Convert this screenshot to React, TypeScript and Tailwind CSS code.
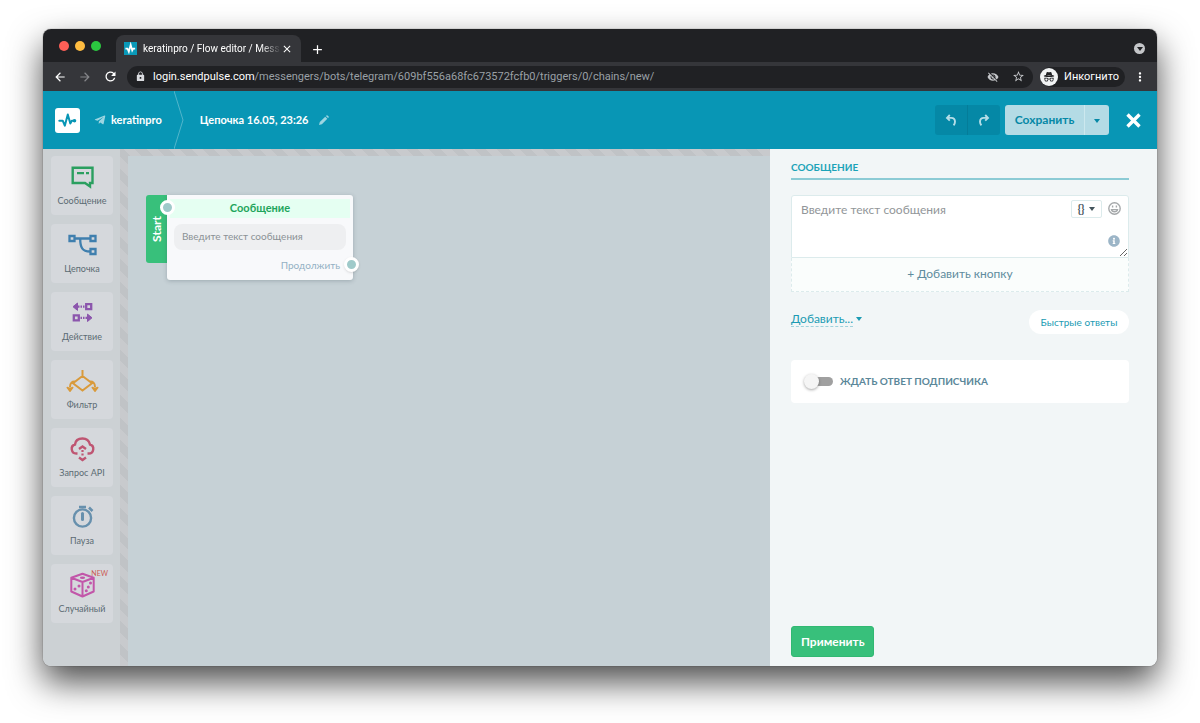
import React, { useState } from 'react';
import { BsIncognito } from 'react-icons/bs';
import { FaInfoCircle, FaTelegramPlane } from 'react-icons/fa';
import { MdAdd, MdArrowBack, MdArrowForward, MdClose, MdLock, MdMoreVert, MdRefresh, MdStarBorder, MdVisibilityOff } from 'react-icons/md';

const PULSE = 'M4.3 12.700h3.400l2.100 5L12.800 6.500l2.500 9 1.500-2.800H20';

const BLOCKS = [
  {
    label: 'Сообщение',
    color: 'text-[#2a9f5f]',
    icon: (
      <>
        <path d="M4.700 4.700h19.800v15.300h-2.500v3.500l-5-3.500H4.700z" strokeWidth={2.400} />
        <path d="M9 10.200h7M18 10.200h3" strokeWidth={2.200} />
      </>
    ),
  },
  {
    label: 'Цепочка',
    color: 'text-[#3f7fae]',
    icon: (
      <>
        <path d="M1.500 5h5v5h-5zM22.500 5h5v5h-5zM22.500 18h5v5h-5z" strokeWidth={2.300} />
        <path d="M7 7.500h15M12.200 7.500c0 9 2 13 9.800 13" strokeWidth={2.300} />
      </>
    ),
  },
  {
    label: 'Действие',
    color: 'text-[#8c56ad]',
    icon: (
      <>
        <path d="M18.200 5.200h5v5h-5zM5.800 16.300h5v5h-5z" strokeWidth={2.300} />
        <path d="M10 7.700h7M12.500 18.800h7" strokeWidth={2.200} strokeDasharray="1.500 1" />
        <path d="M9.500 4v7.400L5 7.700zM19.500 15.100v7.400l4.500-3.700z" fill="currentColor" strokeWidth={1} />
      </>
    ),
  },
  {
    label: 'Фильтр',
    color: 'text-[#d99a3b]',
    icon: (
      <>
        <path d="M14.500 3v6M14.500 9l9.500 7.200-9.500 7.300L5 16.200zM7.500 14.600c-3.500-.4-5.500 1.400-5.500 5.400M21.500 14.600c3.500-.4 5.500 1.400 5.500 5.400" strokeWidth={2} />
        <path d="M-.8 20.500q2.800 1.200 5.600 0L2 24.300zM24.200 20.500q2.800 1.200 5.600 0L27 24.300z" fill="currentColor" strokeWidth={1.400} strokeLinejoin="round" />
      </>
    ),
  },
  {
    label: 'Запрос API',
    color: 'text-[#bf5572]',
    icon: (
      <>
        <path d="M9.500 18.500h-1a4.600 4.600 0 01-1.500-9C7.500 5 10.500 3.500 14.500 3.500S21 5.500 22 9.500a4.600 4.600 0 01-1.300 9h-1.200" strokeWidth={2.400} />
        <path d="M11 14l3.500-2.500L18 14M11 22.500l3.500 2.500 3.500-2.500" strokeWidth={2.400} />
        <path d="M14.500 15v6.500" strokeWidth={2.200} strokeDasharray="2 1.500" />
      </>
    ),
  },
  {
    label: 'Пауза',
    color: 'text-[#6790ad]',
    icon: (
      <>
        <circle cx="14.500" cy="15" r="8.600" strokeWidth={2.400} />
        <path d="M11 4h7M21 4.500l3.500 3.500" strokeWidth={2.600} />
        <path d="M14.500 10.500v6" strokeWidth={3} strokeLinecap="round" />
      </>
    ),
  },
  {
    label: 'Случайный',
    color: 'text-[#c256a9]',
    badge: 'NEW',
    icon: (
      <>
        <path d="M14.500 2.800l11.200 4v13.700l-11.200 5-11.200-5V6.800zM3.300 6.800l11.200 4.200 11.200-4.200M14.500 11v14.500" strokeWidth={2} strokeLinejoin="round" />
        <g fill="currentColor" stroke="none">
          <ellipse cx="14.500" cy="6.700" rx="2.600" ry="1.300" />
          <circle cx="7" cy="18" r="1.500" />
          <circle cx="11" cy="15" r="1.500" />
          <circle cx="18.300" cy="19.800" r="1.500" />
          <circle cx="20.300" cy="16" r="1.500" />
          <circle cx="22.500" cy="12" r="1.500" />
        </g>
      </>
    ),
  },
];

const Caret: React.FC<{ className?: string }> = ({ className = '' }) => (
  <svg className={`w-[6px] h-[4px] shrink-0 ${className}`} viewBox="0 0 6 4" fill="currentColor">
    <path d="M0 0h6L3 4z" />
  </svg>
);

const BrowserBar: React.FC = () => (
  <div className="shrink-0 bg-[#202124] text-white font-['Roboto','Liberation_Sans',sans-serif]">
    <div className="h-[33px] flex items-end pl-4 pr-3">
      <div className="flex gap-[6px] self-center mr-[15px]">
        <span className="size-[10px] rounded-full bg-[#ff5f57]" />
        <span className="size-[10px] rounded-full bg-[#febc40]" />
        <span className="size-[10px] rounded-full bg-[#2bc840]" />
      </div>
      <div className="w-[185px] h-[27px] rounded-t-lg bg-[#35363a] flex items-center px-2 text-[10px]">
        <svg className="size-[13px] shrink-0 bg-[#0a99b8] mr-[6px]" viewBox="2 2 21 21" fill="none" stroke="white" strokeWidth={2.800}>
          <path d={PULSE} />
        </svg>
        <span className="flex-1 whitespace-nowrap [mask-image:linear-gradient(to_right,black_85%,transparent)]">
          keratinpro / Flow editor / Mess
        </span>
        <button aria-label="Close tab">
          <MdClose className="size-[12px]" />
        </button>
      </div>
      <button aria-label="New tab" className="ml-[9px] mb-[5px]">
        <MdAdd className="size-[15px]" />
      </button>
      <button aria-label="Search tabs" className="ml-auto mb-2 size-[11px] rounded-full bg-[#c4c6c9] text-[#202124] flex items-center justify-center">
        <Caret />
      </button>
    </div>

    <div className="h-[29px] bg-[#35363a] flex items-center pl-[10px] pr-[10px]">
      <button aria-label="Back"><MdArrowBack className="size-[14px]" /></button>
      <button aria-label="Forward" className="ml-[11px] text-[#85868a]"><MdArrowForward className="size-[14px]" /></button>
      <button aria-label="Reload" className="ml-[11px]"><MdRefresh className="size-[15px]" /></button>
      <div className="ml-[9px] flex-1 min-w-0 h-[22px] rounded-full bg-[#202124] flex items-center pl-2 pr-2 text-[11px]">
        <MdLock className="size-[11px] shrink-0 mr-[7px] text-[#dadce0]" />
        <span className="flex-1 truncate pt-px text-[#9aa0a6]">
          <span className="text-white">login.sendpulse.com</span>/messengers/bots/telegram/609bf556a68fc673572fcfb0/triggers/0/chains/new/
        </span>
        <MdVisibilityOff className="size-[12px] text-[#c4c6c9] mr-[13px]" />
        <MdStarBorder className="size-[13px] text-[#c4c6c9]" />
      </div>
      <div className="ml-[7px] h-5 rounded-full bg-[#202124] flex items-center pr-[6px] text-[11px]">
        <span className="size-[18px] mr-[6px] rounded-full bg-[#f1f3f4] text-[#202124] flex items-center justify-center">
          <BsIncognito className="size-[12px]" />
        </span>
        <span className="pt-px">Инкогнито</span>
      </div>
      <button aria-label="Menu" className="ml-[8px]"><MdMoreVert className="size-[14px]" /></button>
    </div>
  </div>
);

const Header: React.FC = () => (
  <header className="shrink-0 h-[58px] bg-[#0896b5] text-white flex items-center pl-3 pr-4 font-bold text-[11px]">
    <a href="#" aria-label="SendPulse" className="size-[25px] rounded-[3px] bg-white text-[#0896b5]">
      <svg className="size-[25px]" viewBox="0 0 25 25" fill="none" stroke="currentColor" strokeWidth={2} strokeLinejoin="round" strokeLinecap="round">
        <path d={PULSE} />
        <circle cx="19.500" cy="12.700" r="0.800" />
      </svg>
    </a>
    <a href="#" className="ml-[14px] flex items-center gap-[5px]">
      <FaTelegramPlane className="size-[12px] opacity-60" />
      keratinpro
    </a>
    <svg className="ml-[12px] w-[10px] h-full" viewBox="0 0 10 58" preserveAspectRatio="none" fill="none" stroke="#fff" strokeOpacity={0.3}>
      <path d="M0 0l9 29-9 29" />
    </svg>
    <h1 className="ml-[16px] pt-px">Цепочка 16.05, 23:26</h1>
    <button aria-label="Переименовать" className="ml-[10px] opacity-60">
      <svg className="size-[10px]" viewBox="0 0 10 10" fill="currentColor">
        <path d="M0 10l.8-2.900L6.200 1.700 8.300 3.800 2.900 9.200zM6.900 1l.6-.6q.5-.5 1 0l1.100 1.100q.5.500 0 1l-.6.600z" />
      </svg>
    </button>

    <div className="ml-auto flex items-center">
      <div className="flex rounded-[3px] overflow-hidden bg-[#0588a6] text-[#b5dde7]">
        <button aria-label="Отменить" className="w-[33px] h-[30px] flex items-center justify-center border-r border-[#047d99]">
          <svg className="size-[12px]" viewBox="0 0 12 12" fill="none" stroke="currentColor" strokeWidth={1.900}>
            <path d="M4.800 1L2 3.900l2.800 2.800M2.200 3.900h4Q10 3.900 10 7.800q0 2-1.400 3.500" />
          </svg>
        </button>
        <button aria-label="Повторить" className="w-[32px] h-[30px] flex items-center justify-center">
          <svg className="size-[12px]" viewBox="0 0 12 12" fill="none" stroke="currentColor" strokeWidth={1.900}>
            <path d="M7.200 1L10 3.900 7.200 6.700M9.800 3.900h-4Q2 3.900 2 7.800q0 2 1.400 3.500" />
          </svg>
        </button>
      </div>
      <div className="ml-[5px] flex rounded-[3px] bg-[#b4dbe5] text-[#0588a6]">
        <button className="w-[80px] h-[30px] text-[12px] border-r border-[#cce8ee]">Сохранить</button>
        <button aria-label="Другие варианты" className="w-[24px] h-[30px] pt-[2px] flex items-center justify-center">
          <Caret />
        </button>
      </div>
      <button aria-label="Закрыть" className="ml-[17px]">
        <svg className="size-[15px]" viewBox="0 0 15 15" fill="none" stroke="currentColor" strokeWidth={3.400}>
          <path d="M1.500 1.500l12 12M13.500 1.500l-12 12" />
        </svg>
      </button>
    </div>
  </header>
);

const Sidebar: React.FC = () => (
  <aside className="w-[77px] shrink-0 bg-[#ccd1d4] pl-2 pr-[7px] pt-[7px] flex flex-col gap-[9px]">
    {BLOCKS.map((b) => (
      <button key={b.label} className="relative h-[59px] rounded bg-[#d5d8dc] flex flex-col items-center pt-[7px] text-[9px] leading-[12px] text-[#5b6b73]">
        <svg className={`size-[29px] mb-[3px] overflow-visible ${b.color}`} viewBox="0 0 29 29" fill="none" stroke="currentColor">
          {b.icon}
        </svg>
        {b.label}
        {b.badge && <span className="absolute top-1 right-[5px] text-[7px] leading-[10px] text-[#cc5a52]">{b.badge}</span>}
      </button>
    ))}
  </aside>
);

const Canvas: React.FC = () => (
  <div className="flex-1 min-w-0 flex pl-2 pt-[7px] bg-[repeating-linear-gradient(45deg,#c8cacd_0_8px,#c0c3c6_8px_16px)]">
    <div className="relative flex-1 bg-[#c6d1d6]">
      <div className="absolute left-[18px] top-[39px] flex items-start">
        <div className="w-[21px] h-[68px] rounded-l-[3px] bg-[#38c07b] text-white text-[12px] font-bold flex items-center justify-center">
          <span className="-rotate-90">Start</span>
        </div>
        <div className="relative w-[186px] h-[85px] rounded-r-[3px] rounded-bl-[3px] bg-[#f8f9fb] shadow-[0_1px_4px_rgba(60,80,90,0.3)] px-[3px] pt-1">
          <div className="h-[19px] bg-[#e5fff2] text-[#1fa55c] text-[11px] leading-[18px] font-bold text-center">Сообщение</div>
          <div className="mx-1 mt-[6px] h-[26px] rounded-lg bg-[#eeeff1] px-2 text-[10px] leading-[25px] text-[#8b9195]">Введите текст сообщения</div>
          <div className="mt-[8px] pr-[10px] text-right text-[10px] leading-[14px] text-[#94b1c4]">Продолжить</div>
          <span className="absolute -left-[7px] top-[5px] size-[15px] rounded-full border-[3px] border-white bg-[#9fcaca]" />
          <span className="absolute -right-[6px] top-[62px] size-[15px] rounded-full border-[3px] border-white bg-[#9fcaca] shadow" />
        </div>
      </div>
    </div>
  </div>
);

const MessagePanel: React.FC = () => {
  const [text, setText] = useState('');
  const [wait, setWait] = useState(false);

  return (
    <section className="w-[387px] shrink-0 bg-[#f2f6f7] pl-[21px] pr-7 pt-[11px] pb-[9px] flex flex-col items-stretch">
      <h2 className="h-[20px] border-b-2 border-[#8ccbd5] text-[10px] leading-[14px] font-bold text-[#1ba3b8]">СООБЩЕНИЕ</h2>

      <div className="relative mt-[15px]">
        <textarea
          aria-label="Текст сообщения"
          value={text}
          onChange={(e) => setText(e.target.value)}
          placeholder="Введите текст сообщения"
          className="block w-full h-[63px] resize-y rounded-t-[3px] border border-[#dcebec] bg-white pl-[9px] pr-[64px] pt-[6px] text-[12px] leading-[16px] text-[#4d5b62] placeholder:text-[#929699] outline-none"
        />
        <button aria-label="Переменные" className="absolute right-[27px] top-[5px] w-[31px] h-[18px] rounded-[2px] border border-[#dcebec] bg-white text-[#44545c] text-[11px] leading-[14px] font-bold flex items-center justify-center gap-[5px]">
          {'{}'}
          <Caret />
        </button>
        <button aria-label="Эмодзи" className="absolute right-2 top-[7px] text-[#a5a8aa]">
          <svg className="size-[13px]" viewBox="0 0 13 13" fill="none" stroke="currentColor" strokeWidth={1.400}>
            <circle cx="6.500" cy="6.500" r="5.700" />
            <path d="M3.500 7.600h6q-.5 2.200-3 2.200t-3-2.200z" />
            <path d="M4.600 3.400v2.200M8.400 3.400v2.200" />
          </svg>
        </button>
        <FaInfoCircle className="absolute right-[9px] top-[40px] size-[12px] text-[#9cb5c7]" />
      </div>
      <button className="h-[34px] pb-[2px] border border-t-0 border-dashed border-[#dcebec] bg-[#fafdfc] text-[12px] text-[#5f8c9e]">+ Добавить кнопку</button>

      <div className="mt-[18px] flex items-start justify-between text-[#1b9bb3]">
        <button className="mt-px flex items-center gap-[3px] text-[12px] leading-[15px]">
          <span className="border-b border-dashed border-[#9fd3dc]">Добавить...</span>
          <Caret />
        </button>
        <button className="w-[100px] h-6 rounded-full bg-white text-[10px]">Быстрые ответы</button>
      </div>

      <label className="mt-[26px] h-[43px] rounded bg-white pl-[13px] flex items-center gap-[7px] text-[10px] font-bold text-[#5b8799] cursor-pointer">
        <input type="checkbox" className="peer sr-only" checked={wait} onChange={(e) => setWait(e.target.checked)} />
        <span className="w-[29px] h-[15px] flex items-center peer-checked:flex-row-reverse">
          <span className="size-[15px] shrink-0 rounded-full bg-[#f5f5f5] shadow-[0_1px_3px_rgba(0,0,0,0.35)] z-10" />
          <span className="-ml-[4px] h-[9px] flex-1 rounded-full bg-[#a0a0a0]" />
        </span>
        ЖДАТЬ ОТВЕТ ПОДПИСЧИКА
      </label>

      <button className="mt-auto self-start h-[31px] px-[9px] rounded-[3px] border border-[#31b872] bg-[#38c07b] text-white text-[12px] font-bold">Применить</button>
    </section>
  );
};

const App: React.FC = () => (
  <div className="min-h-screen flex bg-white px-[43px] pt-[29px] pb-[57px] font-['Lato','Noto_Sans',sans-serif]">
    <div className="flex-1 min-w-0 flex flex-col rounded-lg shadow-[0_16px_34px_rgba(0,0,0,0.7),0_0_1px_rgba(0,0,0,0.8)]">
      <div className="flex-1 flex flex-col rounded-lg overflow-hidden">
        <BrowserBar />
        <Header />
        <div className="flex-1 flex min-h-0">
          <Sidebar />
          <Canvas />
          <MessagePanel />
        </div>
      </div>
    </div>
  </div>
);

export default App;
